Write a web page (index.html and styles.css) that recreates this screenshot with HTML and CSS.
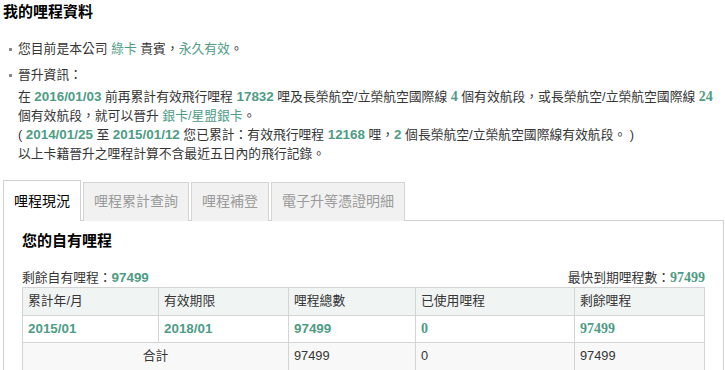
FILE: index.html
```html
<!DOCTYPE html>
<html lang="zh-Hant">
<head>
<meta charset="utf-8">
<title>我的哩程資料</title>
<link rel="stylesheet" href="styles.css">
</head>
<body>
<h1 class="title">我的哩程資料</h1>
<ul class="info">
  <li class="info-item">您目前是本公司 <span class="hl">綠卡</span> 貴賓，<span class="hl">永久有效</span>。</li>
  <li class="info-item">晉升資訊：
    <div class="detail">
      <div class="line">在 <b class="num">2016/01/03</b> 前再累計有效飛行哩程 <b class="num">17832</b> 哩及長榮航空/立榮航空國際線 <b class="num serif">4</b> 個有效航段，或長榮航空/立榮航空國際線 <b class="num serif">24</b></div>
      <div class="line">個有效航段，就可以晉升 <span class="hl">銀卡/星盟銀卡</span>。</div>
      <div class="line">( <b class="num">2014/01/25</b> 至 <b class="num">2015/01/12</b> 您已累計：有效飛行哩程 <b class="num">12168</b> 哩，<b class="num">2</b> 個長榮航空/立榮航空國際線有效航段。 )</div>
      <div class="line">以上卡籍晉升之哩程計算不含最近五日內的飛行記錄。</div>
    </div>
  </li>
</ul>

<div class="tabs">
  <div class="tab active">哩程現況</div>
  <div class="tab">哩程累計查詢</div>
  <div class="tab">哩程補登</div>
  <div class="tab">電子升等憑證明細</div>
</div>
<div class="panel">
  <h2 class="subtitle">您的自有哩程</h2>
  <div class="summary">
    <span>剩餘自有哩程：<b class="num">97499</b></span>
    <span>最快到期哩程數：<b class="num serif">97499</b></span>
  </div>
  <table class="miles">
    <colgroup>
      <col class="c1"><col class="c2"><col class="c3"><col class="c4"><col class="c5">
    </colgroup>
    <thead>
      <tr><th>累計年/月</th><th>有效期限</th><th>哩程總數</th><th>已使用哩程</th><th>剩餘哩程</th></tr>
    </thead>
    <tbody>
      <tr class="data"><td><b class="num">2015/01</b></td><td><b class="num">2018/01</b></td><td><b class="num">97499</b></td><td><b class="num serif">0</b></td><td><b class="num serif">97499</b></td></tr>
      <tr class="total"><td colspan="2" class="center">合計</td><td>97499</td><td>0</td><td>97499</td></tr>
    </tbody>
  </table>
</div>
</body>
</html>
```

FILE: styles.css
```css
* { box-sizing: border-box; }
html, body { margin: 0; padding: 0; background: #fff; }
body {
  width: 725px;
  font-family: "Liberation Sans", "Noto Sans CJK TC", sans-serif;
  font-size: 12.8px;
  color: #353535;
  line-height: 20px;
}
.title {
  margin: 0;
  padding: 3px 3px 0;
  font-size: 15px;
  line-height: 18px;
  font-weight: bold;
  color: #000;
}
.info {
  list-style: none;
  margin: 18px 0 0;
  padding: 0 0 0 18px;
}
.info-item { position: relative; margin-bottom: 6px; }
.info-item::before {
  content: "";
  position: absolute;
  left: -9px;
  top: 9px;
  width: 3px;
  height: 3px;
  background: #8a8a8a;
}
.detail { margin-top: 2px; }
.line { white-space: nowrap; }
.line + .line { margin-top: -1px; }
.hl { color: #4e9c85; }
.num { color: #4e9c85; font-weight: bold; font-size: 13.4px; }
.serif { font-family: "Liberation Serif", serif; font-size: 14px; }

.tabs {
  display: flex;
  align-items: flex-end;
  gap: 2px;
  margin: 16px 0 -1px 3px;
  position: relative;
  z-index: 1;
}
.tab {
  height: 39px;
  padding: 0 10px;
  border: 1px solid #d4d4d4;
  border-bottom: none;
  background: #f1f1f1;
  color: #9a9a9a;
  font-size: 14px;
  line-height: 37px;
}
.tab.active {
  height: 41px;
  background: #fff;
  color: #000;
  border-color: #d0d0d0;
  line-height: 40px;
}
.panel {
  margin: 0 1px 0 3px;
  border: 1px solid #d0d0d0;
  padding: 0 18px 20px;
}
.subtitle {
  margin: 10px 0 0;
  font-size: 15px;
  line-height: 20px;
  font-weight: bold;
  color: #000;
}
.summary {
  display: flex;
  justify-content: space-between;
  margin-top: 17px;
  line-height: 19px;
}
.miles {
  width: 100%;
  border-collapse: collapse;
  border: 1px solid #d4d4d4;
}
.c1 { width: 136px; }
.c2 { width: 130px; }
.c3 { width: 127px; }
.c4 { width: 159px; }
.c5 { width: 130px; }
.miles th, .miles td {
  border: 1px solid #d4d4d4;
  padding: 3px 5px 4px;
  text-align: left;
  font-weight: normal;
  line-height: 20px;
}
.miles thead th { background: #f0f4f2; }
.miles .data td { background: #fff; padding: 3px 5px; }
.miles .total td { background: #f8f8f8; }
.miles .center { text-align: center; }
```
